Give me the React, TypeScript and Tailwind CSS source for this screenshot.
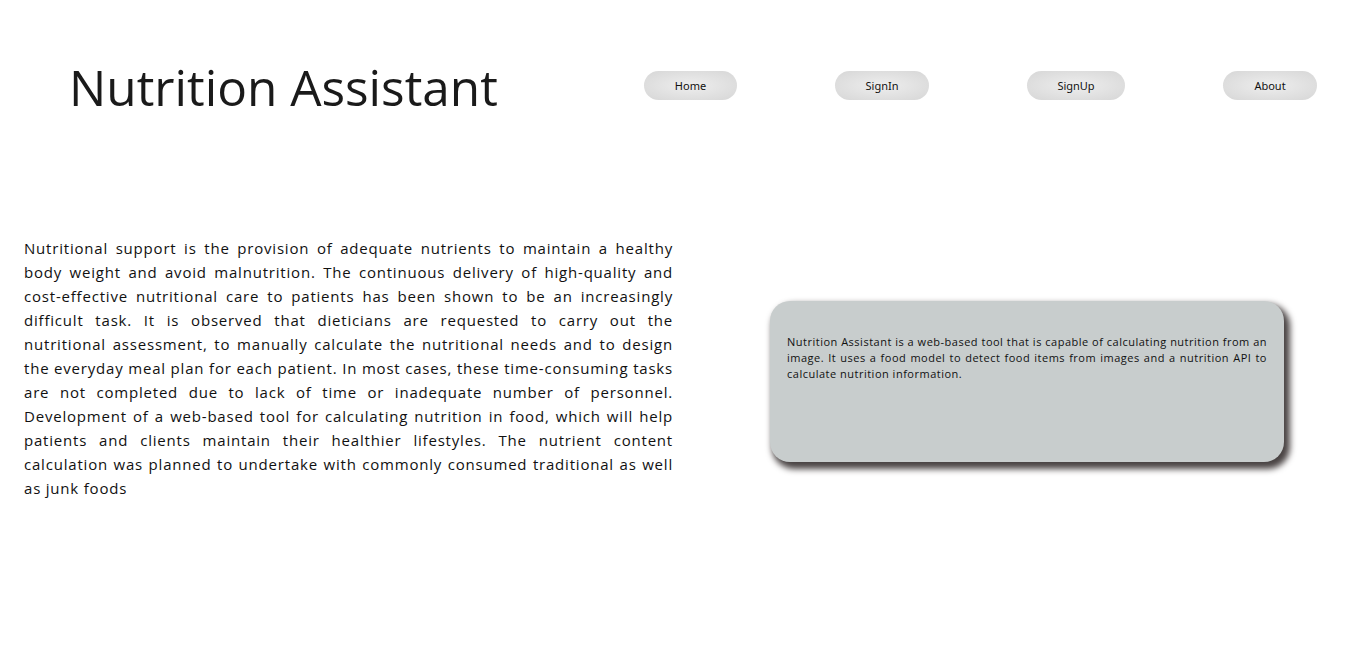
import React from "react";

const navItems = [
  { label: "Home", w: "w-[93px]", ml: "" },
  { label: "SignIn", w: "w-[94px]", ml: "ml-[98px]" },
  { label: "SignUp", w: "w-[98px]", ml: "ml-[98px]" },
  { label: "About", w: "w-[94px]", ml: "ml-[98px]" },
];

export default function App() {
  return (
    <div className="min-h-[657px] w-[1366px] bg-white text-[#111]" style={{ fontFamily: '"Open Sans", "DejaVu Sans", sans-serif' }}>
      <header className="flex items-start pt-[52px]">
        <h1 className="ml-[69px] w-[519px] text-[49.5px] leading-[70px] text-[#1a1a1a]">Nutrition Assistant</h1>
        <nav className="ml-[56px] mt-[19px] flex items-center">
          {navItems.map((n) => (
            <button
              key={n.label}
              className={`${n.ml} ${n.w} h-[29px] rounded-full bg-[radial-gradient(ellipse_at_center,#eeeeee_0%,#d6d6d6_100%)] pt-[1px] text-[11px] text-[#111]`}
              style={{ fontFamily: '"Noto Sans", sans-serif' }}
            >
              {n.label}
            </button>
          ))}
        </nav>
      </header>
      <main className="mt-[114px] flex items-center">
        <p className="ml-[24px] w-[649px] text-justify text-[15px] leading-[24px] tracking-[0.8px]">
          Nutritional support is the provision of adequate nutrients to maintain a healthy body weight and avoid malnutrition. The continuous delivery of high-quality and cost-effective nutritional care to patients has been shown to be an increasingly difficult task. It is observed that dieticians are requested to carry out the nutritional assessment, to manually calculate the nutritional needs and to design the everyday meal plan for each patient. In most cases, these time-consuming tasks are not completed due to lack of time or inadequate number of personnel. Development of a web-based tool for calculating nutrition in food, which will help patients and clients maintain their healthier lifestyles. The nutrient content calculation was planned to undertake with commonly consumed traditional as well as junk foods
        </p>
        <div className="ml-[97px] mt-[26px] h-[161px] w-[514px] rounded-[20px] bg-[#c8cdcd] px-[17px] pt-[33px] shadow-[4px_5px_6px_2px_#4a4444]">
          <p className="text-justify text-[11px] leading-[16px] tracking-[0.5px] text-[#111]">
            Nutrition Assistant is a web-based tool that is capable of calculating nutrition from an image. It uses a food model to detect food items from images and a nutrition API to calculate nutrition information.
          </p>
        </div>
      </main>
    </div>
  );
}
